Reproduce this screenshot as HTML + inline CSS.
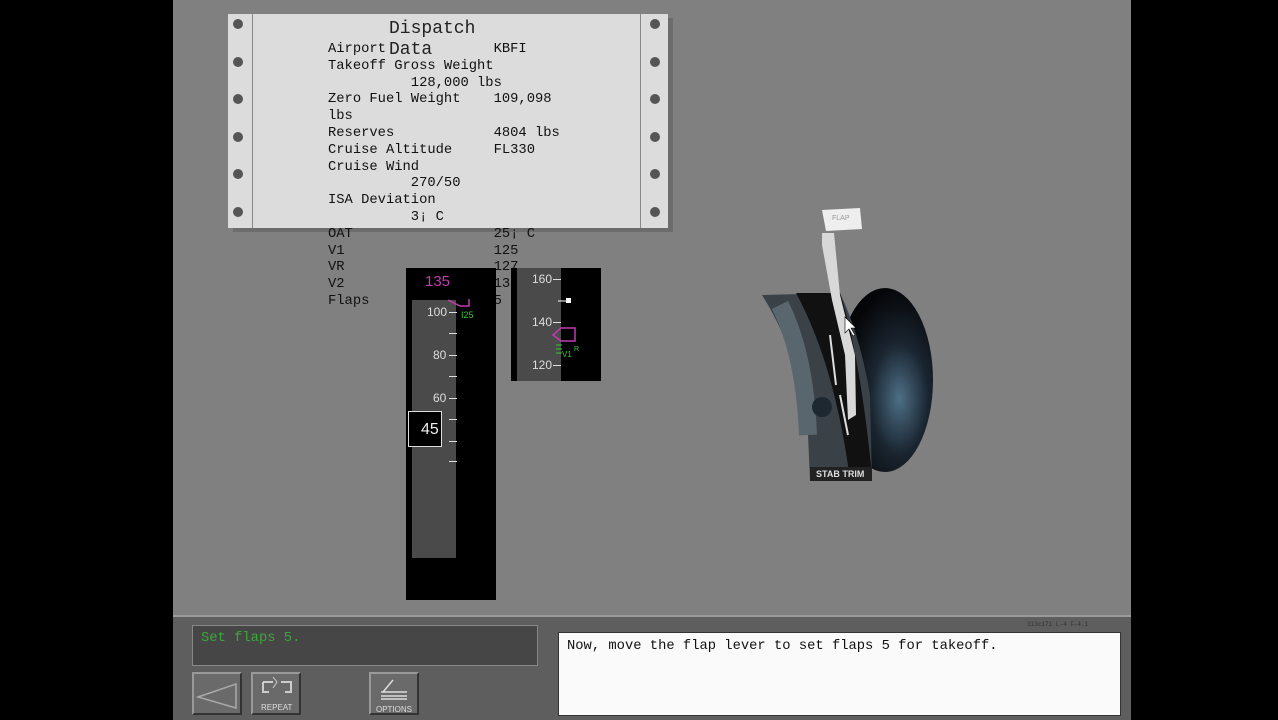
<!DOCTYPE html>
<html><head><meta charset="utf-8"><style>
*{margin:0;padding:0;box-sizing:border-box}
body{width:1278px;height:720px;background:#000;position:relative;overflow:hidden;font-family:"Liberation Mono",monospace}
.a{position:absolute}
#main{left:173px;top:0;width:958px;height:615px;background:#808080}
#bot{left:173px;top:615px;width:958px;height:105px;background:#5e5e5e;border-top:2px solid #9a9a9a}
.card{left:228px;top:14px;width:440px;height:214px;background:#dcdcdc;box-shadow:5px 4px 0 #6c6c6c}
.hole{width:10px;height:10px;border-radius:50%;background:#555}
.t{font-size:13.8px;color:#111;white-space:pre;line-height:16.8px}
.tick{background:#ddd;height:1px;width:8px}
.lab{color:#ddd;font-family:"Liberation Sans",sans-serif;font-size:12px}
.btn{width:50px;height:43px;background:#6a6a6a;border:2px solid;border-color:#999 #333 #333 #999}
</style></head><body>
<div id="main" class="a"></div>
<div class="card a">
 <div class="a" style="left:24px;top:0;width:1px;height:214px;background:#888"></div>
 <div class="a" style="left:412px;top:0;width:1px;height:214px;background:#888"></div>
 <div class="hole a" style="left:5px;top:5px"></div><div class="hole a" style="left:5px;top:43px"></div><div class="hole a" style="left:5px;top:80px"></div><div class="hole a" style="left:5px;top:118px"></div><div class="hole a" style="left:5px;top:155px"></div><div class="hole a" style="left:5px;top:193px"></div>
 <div class="hole a" style="left:422px;top:5px"></div><div class="hole a" style="left:422px;top:43px"></div><div class="hole a" style="left:422px;top:80px"></div><div class="hole a" style="left:422px;top:118px"></div><div class="hole a" style="left:422px;top:155px"></div><div class="hole a" style="left:422px;top:193px"></div>
</div>
<div class="a" style="left:389px;top:19px;font-size:18px;color:#222">Dispatch</div>
<div class="a" style="left:389px;top:40px;font-size:18px;color:#222">Data</div>
<div class="a t" style="left:328px;top:42px">Airport             KBFI
Takeoff Gross Weight
          128,000 lbs
Zero Fuel Weight    109,098
lbs
Reserves            4804 lbs
Cruise Altitude     FL330
Cruise Wind
          270/50
ISA Deviation
          3¡ C
OAT                 25¡ C
V1                  125
VR                  127
V2                  13
Flaps               5</div>

<!-- tape 1 -->
<div class="a" style="left:406px;top:268px;width:90px;height:332px;background:#000"></div>
<div class="a" style="left:412px;top:300px;width:44px;height:258px;background:#4a4a4a"></div>
<div class="a" style="left:425px;top:273px;color:#c03cb0;font-family:'Liberation Sans';font-size:15px">135</div>
<div class="a lab" style="left:427px;top:305px">100</div><div class="tick a" style="left:449px;top:312px"></div>
<div class="tick a" style="left:449px;top:333px"></div>
<div class="a lab" style="left:433px;top:348px">80</div><div class="tick a" style="left:449px;top:355px"></div>
<div class="tick a" style="left:449px;top:376px"></div>
<div class="a lab" style="left:433px;top:391px">60</div><div class="tick a" style="left:449px;top:398px"></div>
<div class="tick a" style="left:449px;top:419px"></div><div class="tick a" style="left:449px;top:441px"></div><div class="tick a" style="left:449px;top:461px"></div>
<svg class="a" style="left:440px;top:296px" width="40" height="30"><path d="M8 4 L20 10 L29 10 L29 3" stroke="#c03cb0" fill="none" stroke-width="1.5"/><text x="21" y="22" fill="#3c3" font-size="9" font-family="Liberation Sans">I25</text></svg>
<div class="a" style="left:408px;top:411px;width:34px;height:36px;background:#000;border:1px solid #ddd"></div>
<div class="a" style="left:421px;top:421px;color:#eee;font-family:'Liberation Sans';font-size:16px">45</div>
<!-- tape 2 -->
<div class="a" style="left:511px;top:268px;width:90px;height:113px;background:#000"></div>
<div class="a" style="left:517px;top:268px;width:44px;height:113px;background:#4a4a4a"></div>
<div class="a lab" style="left:532px;top:272px">160</div><div class="tick a" style="left:553px;top:279px"></div>
<div class="a lab" style="left:532px;top:315px">140</div><div class="tick a" style="left:553px;top:322px"></div>
<div class="a lab" style="left:532px;top:358px">120</div><div class="tick a" style="left:553px;top:365px"></div>
<svg class="a" style="left:550px;top:292px" width="40" height="70"><path d="M8 9 H18" stroke="#fff"/><rect x="16" y="6" width="5" height="5" fill="#fff"/><path d="M3 43 L11 36 H25 V49 H11 Z" stroke="#c03cb0" fill="none" stroke-width="1.5"/><path d="M6 53H12M6 57H12M6 61H12" stroke="#3c3"/><text x="12" y="65" fill="#3c3" font-size="8" font-family="Liberation Sans">V1</text><text x="24" y="59" fill="#3c3" font-size="7" font-family="Liberation Sans">R</text></svg>

<!-- flap lever -->
<svg class="a" style="left:760px;top:205px" width="180" height="280">
<defs><radialGradient id="g" cx="0.65" cy="0.6" r="0.6"><stop offset="0" stop-color="#4e6f86"/><stop offset="0.5" stop-color="#1a2530"/><stop offset="1" stop-color="#050608"/></radialGradient></defs>
<ellipse cx="125" cy="175" rx="48" ry="92" fill="url(#g)"/>
<path d="M2 90 L80 88 Q100 130 110 190 L112 275 L50 275 L48 230 Q40 150 2 90Z" fill="#3a4248"/>
<path d="M36 88 L80 88 Q100 150 112 270 L90 275 Q75 160 36 88Z" fill="#111"/>
<path d="M20 100 Q45 150 48 230" stroke="#5a666e" stroke-width="18" fill="none"/>
<circle cx="62" cy="202" r="10" fill="#1e2830"/>
<rect x="50" y="262" width="62" height="14" fill="#222"/>
<text x="56" y="272" fill="#ddd" font-size="9" font-family="Liberation Sans" font-weight="bold">STAB TRIM</text>
<path d="M70 130 L76 180 M80 190 L88 230" stroke="#ddd" stroke-width="2"/>
<path d="M62 28 L74 28 L80 90 L95 150 L96 210 L88 215 L85 150 L72 95 L62 40Z" fill="#d8d8d8"/>
<path d="M62 5 L100 3 L102 24 L66 26Z" fill="#eee"/>
<text x="72" y="15" fill="#999" font-size="7" font-family="Liberation Sans">FLAP</text>
<path d="M85 112 L85 128 L89 124 L93 131 L95 130 L91 123 L96 123Z" fill="#fff" stroke="#000" stroke-width="0.6"/>
</svg>

<!-- bottom -->
<div id="bot" class="a"></div>
<div class="a" style="left:1027px;top:621px;font-size:6px;color:#333">313c171    L-4 F-4.1</div>
<div class="a" style="left:192px;top:625px;width:346px;height:41px;background:#464646;border:1px solid #888"></div>
<div class="a" style="left:201px;top:631px;color:#3aa83a;font-size:13.8px">Set flaps 5.</div>
<div class="btn a" style="left:192px;top:672px"><svg width="46" height="39"><path d="M4 23 L42 10 L42 34Z" fill="#6a6a6a" stroke="#aaa" stroke-width="1.5"/></svg></div>
<div class="btn a" style="left:251px;top:672px"><svg width="46" height="39"><path d="M10 8H20M28 8H38V18H32M16 18H10V8" stroke="#ccc" fill="none" stroke-width="2"/><path d="M20 14L24 8L20 3" stroke="#ccc" fill="none"/><text x="8" y="36" fill="#ddd" font-size="8" font-family="Liberation Sans">REPEAT</text></svg></div>
<div class="btn a" style="left:369px;top:672px"><svg width="46" height="39"><path d="M12 18 L22 6 M10 18H36 M10 22H36 M10 25H36" stroke="#ddd" stroke-width="1.5" fill="none"/><text x="5" y="38" fill="#ddd" font-size="8" font-family="Liberation Sans">OPTIONS</text></svg></div>
<div class="a" style="left:558px;top:632px;width:563px;height:84px;background:#fafafa;border:1px solid #333"></div>
<div class="a" style="left:567px;top:639px;color:#111;font-size:13.8px">Now, move the flap lever to set flaps 5 for takeoff.</div>
</body></html>
